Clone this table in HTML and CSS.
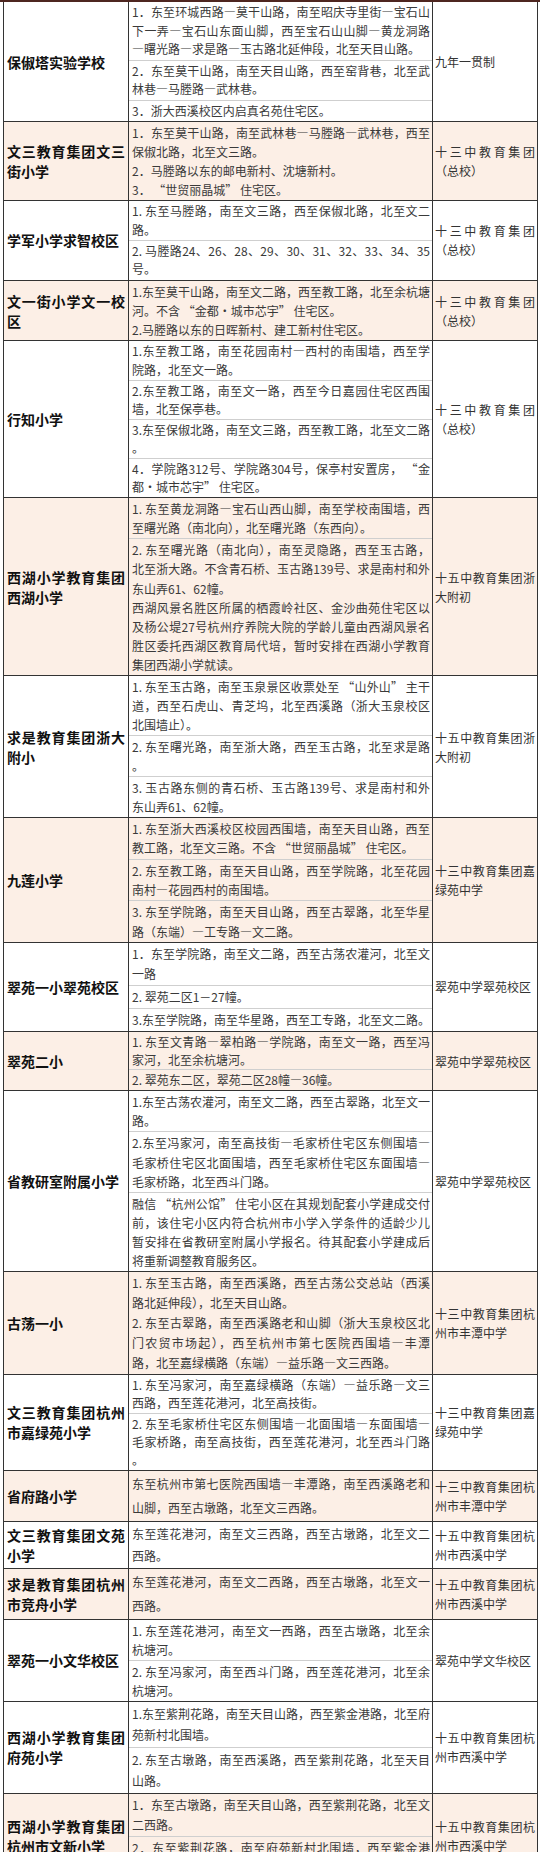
FILE: index.html
```html
<!DOCTYPE html>
<html lang="zh-CN">
<head>
<meta charset="utf-8">
<title>学区划分</title>
<link rel="stylesheet" href="styles.css">
</head>
<body>
<div class="sheet">
<div class="table">

  <div class="row">
    <div class="name">保俶塔实验学校</div>
    <div class="area lh185">
      <div class="sub"><span class="l j">1．东至环城西路—莫干山路，南至昭庆寺里街—宝石山</span><span class="l j">下一弄—宝石山东面山脚，西至宝石山山脚—黄龙洞路</span><span class="l">—曙光路—求是路—玉古路北延伸段，北至天目山路。</span></div>
      <div class="sub"><span class="l j">2．东至莫干山路，南至天目山路，西至窑背巷，北至武</span><span class="l">林巷—马塍路—武林巷。</span></div>
      <div class="sub"><span class="l">3．浙大西溪校区内启真名苑住宅区。</span></div>
    </div>
    <div class="mid">九年一贯制</div>
  </div>

  <div class="row alt">
    <div class="name"><span class="l j">文三教育集团文三</span><span class="l">街小学</span></div>
    <div class="area lh191">
      <div class="sub"><span class="l j">1．东至莫干山路，南至武林巷—马塍路—武林巷，西至</span><span class="l">保俶北路，北至文三路。</span><span class="l">2．马塍路以东的邮电新村、沈塘新村。</span><span class="l">3． “世贸丽晶城” 住宅区。</span></div>
    </div>
    <div class="mid"><span class="l j">十三中教育集团</span><span class="l">（总校）</span></div>
  </div>

  <div class="row">
    <div class="name">学军小学求智校区</div>
    <div class="area lh183">
      <div class="sub"><span class="l j">1. 东至马塍路，南至文三路，西至保俶北路，北至文二</span><span class="l">路。</span></div>
      <div class="sub"><span class="l j">2. 马塍路24、26、28、29、30、31、32、33、34、35</span><span class="l">号。</span></div>
    </div>
    <div class="mid"><span class="l j">十三中教育集团</span><span class="l">（总校）</span></div>
  </div>

  <div class="row alt">
    <div class="name"><span class="l j">文一街小学文一校</span><span class="l">区</span></div>
    <div class="area lh193">
      <div class="sub"><span class="l j">1.东至莫干山路，南至文二路，西至教工路，北至余杭塘</span><span class="l">河。不含 “金都·城市芯宇” 住宅区。</span><span class="l">2.马塍路以东的日晖新村、建工新村住宅区。</span></div>
    </div>
    <div class="mid"><span class="l j">十三中教育集团</span><span class="l">（总校）</span></div>
  </div>

  <div class="row">
    <div class="name">行知小学</div>
    <div class="area lh181">
      <div class="sub"><span class="l j">1.东至教工路，南至花园南村—西村的南围墙，西至学</span><span class="l">院路，北至文一路。</span></div>
      <div class="sub"><span class="l j">2.东至教工路，南至文一路，西至今日嘉园住宅区西围</span><span class="l">墙，北至保亭巷。</span></div>
      <div class="sub"><span class="l j">3.东至保俶北路，南至文三路，西至教工路，北至文二路</span><span class="l">。</span></div>
      <div class="sub"><span class="l j">4．学院路312号、学院路304号，保亭村安置房， “金</span><span class="l">都·城市芯宇” 住宅区。</span></div>
    </div>
    <div class="mid"><span class="l j">十三中教育集团</span><span class="l">（总校）</span></div>
  </div>

  <div class="row alt">
    <div class="name"><span class="l j">西湖小学教育集团</span><span class="l">西湖小学</span></div>
    <div class="area lh191">
      <div class="sub"><span class="l j">1. 东至黄龙洞路—宝石山西山脚，南至学校南围墙，西</span><span class="l">至曙光路（南北向），北至曙光路（东西向）。</span></div>
      <div class="sub"><span class="l j">2. 东至曙光路（南北向），南至灵隐路，西至玉古路，</span><span class="l j">北至浙大路。不含青石桥、玉古路139号、求是南村和外</span><span class="l">东山弄61、62幢。</span><span class="l j">西湖风景名胜区所属的栖霞岭社区、金沙曲苑住宅区以</span><span class="l j">及杨公堤27号杭州疗养院大院的学龄儿童由西湖风景名</span><span class="l j">胜区委托西湖区教育局代培，暂时安排在西湖小学教育</span><span class="l">集团西湖小学就读。</span></div>
    </div>
    <div class="mid"><span class="l j">十五中教育集团浙</span><span class="l">大附初</span></div>
  </div>

  <div class="row">
    <div class="name"><span class="l j">求是教育集团浙大</span><span class="l">附小</span></div>
    <div class="area lh19">
      <div class="sub"><span class="l j">1. 东至玉古路，南至玉泉景区收票处至 “山外山” 主干</span><span class="l j">道，西至石虎山、青芝坞，北至西溪路（浙大玉泉校区</span><span class="l">北围墙止）。</span></div>
      <div class="sub"><span class="l j">2. 东至曙光路，南至浙大路，西至玉古路，北至求是路</span><span class="l">。</span></div>
      <div class="sub"><span class="l j">3. 玉古路东侧的青石桥、玉古路139号、求是南村和外</span><span class="l">东山弄61、62幢。</span></div>
    </div>
    <div class="mid"><span class="l j">十五中教育集团浙</span><span class="l">大附初</span></div>
  </div>

  <div class="row alt">
    <div class="name">九莲小学</div>
    <div class="area lh193">
      <div class="sub"><span class="l j">1. 东至浙大西溪校区校园西围墙，南至天目山路，西至</span><span class="l">教工路，北至文三路。不含 “世贸丽晶城” 住宅区。</span></div>
      <div class="sub"><span class="l j">2. 东至教工路，南至天目山路，西至学院路，北至花园</span><span class="l">南村—花园西村的南围墙。</span></div>
      <div class="sub"><span class="l j">3. 东至学院路，南至天目山路，西至古翠路，北至华星</span><span class="l">路（东端）—工专路—文二路。</span></div>
    </div>
    <div class="mid"><span class="l j">十三中教育集团嘉</span><span class="l">绿苑中学</span></div>
  </div>

  <div class="row">
    <div class="name">翠苑一小翠苑校区</div>
    <div class="area lh20">
      <div class="sub"><span class="l j">1．东至学院路，南至文二路，西至古荡农灌河，北至文</span><span class="l">一路</span></div>
      <div class="sub"><span class="l">2. 翠苑二区1－27幢。</span></div>
      <div class="sub"><span class="l j">3.东至学院路，南至华星路，西至工专路，北至文二路。</span></div>
    </div>
    <div class="mid">翠苑中学翠苑校区</div>
  </div>

  <div class="row alt">
    <div class="name">翠苑二小</div>
    <div class="area lh178">
      <div class="sub"><span class="l j">1. 东至文青路—翠柏路—学院路，南至文一路，西至冯</span><span class="l">家河，北至余杭塘河。</span></div>
      <div class="sub"><span class="l">2. 翠苑东二区，翠苑二区28幢—36幢。</span></div>
    </div>
    <div class="mid">翠苑中学翠苑校区</div>
  </div>

  <div class="row">
    <div class="name">省教研室附属小学</div>
    <div class="area lh191">
      <div class="sub"><span class="l j">1.东至古荡农灌河，南至文二路，西至古翠路，北至文一</span><span class="l">路。</span></div>
      <div class="sub"><span class="l j">2.东至冯家河，南至高技街—毛家桥住宅区东侧围墙—</span><span class="l j">毛家桥住宅区北面围墙，西至毛家桥住宅区东面围墙—</span><span class="l">毛家桥路，北至西斗门路。</span></div>
      <div class="sub"><span class="l j">融信 “杭州公馆” 住宅小区在其规划配套小学建成交付</span><span class="l j">前，该住宅小区内符合杭州市小学入学条件的适龄少儿</span><span class="l j">暂安排在省教研室附属小学报名。待其配套小学建成后</span><span class="l">将重新调整教育服务区。</span></div>
    </div>
    <div class="mid">翠苑中学翠苑校区</div>
  </div>

  <div class="row alt">
    <div class="name">古荡一小</div>
    <div class="area lh20">
      <div class="sub"><span class="l j">1. 东至玉古路，南至西溪路，西至古荡公交总站（西溪</span><span class="l">路北延伸段），北至天目山路。</span><span class="l j">2. 东至古翠路，南至西溪路老和山脚（浙大玉泉校区北</span><span class="l j">门农贸市场起），西至杭州市第七医院西围墙—丰潭</span><span class="l">路，北至嘉绿横路（东端）—益乐路—文三西路。</span></div>
    </div>
    <div class="mid"><span class="l j">十三中教育集团杭</span><span class="l">州市丰潭中学</span></div>
  </div>

  <div class="row">
    <div class="name"><span class="l j">文三教育集团杭州</span><span class="l">市嘉绿苑小学</span></div>
    <div class="area lh179">
      <div class="sub"><span class="l j">1. 东至冯家河，南至嘉绿横路（东端）—益乐路—文三</span><span class="l">西路，西至莲花港河，北至高技街。</span></div>
      <div class="sub"><span class="l j">2. 东至毛家桥住宅区东侧围墙—北面围墙—东面围墙—</span><span class="l j">毛家桥路，南至高技街，西至莲花港河，北至西斗门路</span><span class="l">。</span></div>
    </div>
    <div class="mid"><span class="l j">十三中教育集团嘉</span><span class="l">绿苑中学</span></div>
  </div>

  <div class="row alt">
    <div class="name">省府路小学</div>
    <div class="area lh24">
      <div class="sub"><span class="l j">东至杭州市第七医院西围墙—丰潭路，南至西溪路老和</span><span class="l">山脚，西至古墩路，北至文三西路。</span></div>
    </div>
    <div class="mid"><span class="l j">十三中教育集团杭</span><span class="l">州市丰潭中学</span></div>
  </div>

  <div class="row">
    <div class="name"><span class="l j">文三教育集团文苑</span><span class="l">小学</span></div>
    <div class="area lh22">
      <div class="sub"><span class="l j">东至莲花港河，南至文三西路，西至古墩路，北至文二</span><span class="l">西路。</span></div>
    </div>
    <div class="mid"><span class="l j">十五中教育集团杭</span><span class="l">州市西溪中学</span></div>
  </div>

  <div class="row alt">
    <div class="name"><span class="l j">求是教育集团杭州</span><span class="l">市竞舟小学</span></div>
    <div class="area lh24">
      <div class="sub"><span class="l j">东至莲花港河，南至文二西路，西至古墩路，北至文一</span><span class="l">西路。</span></div>
    </div>
    <div class="mid"><span class="l j">十五中教育集团杭</span><span class="l">州市西溪中学</span></div>
  </div>

  <div class="row">
    <div class="name">翠苑一小文华校区</div>
    <div class="area lh19">
      <div class="sub"><span class="l j">1. 东至莲花港河，南至文一西路，西至古墩路，北至余</span><span class="l">杭塘河。</span></div>
      <div class="sub"><span class="l j">2. 东至冯家河，南至西斗门路，西至莲花港河，北至余</span><span class="l">杭塘河。</span></div>
    </div>
    <div class="mid">翠苑中学文华校区</div>
  </div>

  <div class="row">
    <div class="name"><span class="l j">西湖小学教育集团</span><span class="l">府苑小学</span></div>
    <div class="area lh215">
      <div class="sub"><span class="l j">1.东至紫荆花路，南至天目山路，西至紫金港路，北至府</span><span class="l">苑新村北围墙。</span></div>
      <div class="sub"><span class="l j">2. 东至古墩路，南至西溪路，西至紫荆花路，北至天目</span><span class="l">山路。</span></div>
    </div>
    <div class="mid"><span class="l j">十五中教育集团杭</span><span class="l">州市西溪中学</span></div>
  </div>

  <div class="row alt">
    <div class="name"><span class="l j">西湖小学教育集团</span><span class="l">杭州市文新小学</span></div>
    <div class="area lh20">
      <div class="sub"><span class="l j">1．东至古墩路，南至天目山路，西至紫荆花路，北至文</span><span class="l">二西路。</span></div>
      <div class="sub"><span class="l j">2．东至紫荆花路，南至府苑新村北围墙，西至紫金港</span><span class="l">路，北至天目山路。</span></div>
    </div>
    <div class="mid"><span class="l j">十五中教育集团杭</span><span class="l">州市西溪中学</span></div>
  </div>

</div>
</div>
</body>
</html>
```

FILE: styles.css
```css
html, body {
  margin: 0;
  padding: 0;
  background: #ffffff;
}

body {
  font-family: "Noto Sans CJK SC", "Noto Sans", sans-serif;
  color: #333333;
}

.sheet {
  border-top: 2px solid #4e2620;
}

.table {
  margin-left: 3px;
  width: 533px;
  border-left: 1px solid #333333;
  border-right: 1px solid #333333;
}

.row {
  display: grid;
  grid-template-columns: 125px 304px 1fr;
  border-bottom: 1px solid #333333;
  background: #ffffff;
}

.row.alt {
  background: #fcefe6;
}

.name {
  display: flex;
  flex-direction: column;
  justify-content: center;
  padding: 0 3px 0 3px;
  border-right: 1px solid #333333;
  font-size: 14px;
  font-weight: bold;
  line-height: 20px;
  color: #111111;
}

.area {
  border-right: 1px solid #333333;
  font-size: 12px;
  color: #3a3a3a;
}

.sub {
  padding: 1px 2px 1px 3px;
}

.sub + .sub {
  border-top: 1px solid #cfcfcf;
}

.l {
  display: block;
  white-space: nowrap;
}

.j {
  text-align: justify;
  text-align-last: justify;
}

.lh178 { line-height: 17.8px; }
.lh179 { line-height: 17.9px; }
.lh181 { line-height: 18.1px; }
.lh183 { line-height: 18.3px; }
.lh185 { line-height: 18.5px; }
.lh19 { line-height: 19px; }
.lh191 { line-height: 19.1px; }
.lh193 { line-height: 19.3px; }
.lh20 { line-height: 20px; }
.lh215 { line-height: 21.5px; }
.lh22 { line-height: 22px; }
.lh24 { line-height: 24px; }

.mid {
  display: flex;
  flex-direction: column;
  justify-content: center;
  padding: 0 2px 0 2px;
  font-size: 12px;
  line-height: 19px;
  color: #333333;
}
```
